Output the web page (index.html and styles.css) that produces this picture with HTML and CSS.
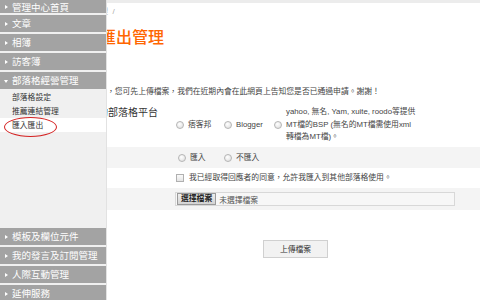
FILE: index.html
```html
<!DOCTYPE html>
<html lang="zh-Hant">
<head>
<meta charset="utf-8">
<title>匯入匯出管理</title>
<link rel="stylesheet" href="styles.css">
</head>
<body>
<div class="page">
  <div class="topbar"></div>
  <div class="content">
    <div class="crumb">部落格管理&nbsp; /</div>
    <h1 class="title">匯入匯出管理</h1>
    <p class="intro">若您想使用，您可先上傳檔案，我們在近期內會在此網頁上告知您是否已通過申請。謝謝！</p>
    <div class="form">
      <div class="row row-a">
        <div class="label">您原本的部落格平台</div>
        <div class="options">
          <label class="opt opt-1"><span class="radio"></span>痞客邦</label>
          <label class="opt opt-2"><span class="radio"></span>Blogger</label>
          <label class="opt opt-3"><span class="radio"></span><span class="multi">yahoo, 無名, Yam, xuite, roodo等提供<br>MT檔的BSP (無名的MT檔需使用xml<br>轉檔為MT檔)。</span></label>
        </div>
      </div>
      <div class="row row-b band">
        <div class="label">留言</div>
        <div class="options">
          <label class="opt opt-in"><span class="radio"></span>匯入</label>
          <label class="opt"><span class="radio"></span>不匯入</label>
        </div>
      </div>
      <div class="row row-c">
        <div class="label">同意</div>
        <label class="opt"><span class="check"></span>我已經取得回應者的同意，允許我匯入到其他部落格使用。</label>
      </div>
      <div class="row row-d band">
        <div class="label">檔案</div>
        <div class="filebox"><span class="filebtn">選擇檔案</span><span class="filename">未選擇檔案</span></div>
      </div>
    </div>
    <div class="actions"><button class="upload" type="button">上傳檔案</button></div>
  </div>
</div>
<nav class="sidebar">
  <div class="head">管理中心首頁</div>
  <div class="head">文章</div>
  <div class="head">相簿</div>
  <div class="head">訪客簿</div>
  <div class="head open">部落格經營管理</div>
  <div class="submenu">
    <a href="#">部落格設定</a>
    <a href="#">推薦連結管理</a>
    <a href="#" class="current">匯入匯出<span class="circle"></span></a>
  </div>
  <div class="head">模板及欄位元件</div>
  <div class="head">我的發言及訂閱管理</div>
  <div class="head">人際互動管理</div>
  <div class="head">延伸服務</div>
</nav>
</body>
</html>
```
FILE: styles.css
```css
* { box-sizing: border-box; margin: 0; padding: 0; }
html, body { width: 480px; height: 300px; overflow: hidden; background: #fff; }
body {
  position: relative;
  font-family: "Liberation Sans", "Noto Sans CJK TC", sans-serif;
  color: #333;
}
.topbar { height: 3px; background: #ececec; }
.content { padding-left: 68px; }
.crumb { margin-top: 3px; font-size: 8px; line-height: 12px; color: #aaa; white-space: nowrap; }
.title {
  margin-top: 10px;
  font-size: 16px;
  line-height: 20px;
  font-weight: 500;
  color: #ff6600;
  white-space: nowrap;
}
.intro {
  margin-top: 38px;
  font-size: 7.8px;
  line-height: 12px;
  color: #444;
  white-space: nowrap;
}
.form { margin-top: 1px; }
.row { display: flex; align-items: center; font-size: 7.8px; color: #444; }
.band { background: #f4f4f4; }
.label { width: 108px; flex: none; font-size: 10px; line-height: 14px; color: #333; white-space: nowrap; overflow: hidden; }
.row-a { height: 48px; align-items: flex-start; }
.row-a .label { padding-top: 7px; }
.row-a .options { align-self: center; padding-top: 4px; }
.row-b { height: 21px; }
.row-c { height: 20px; }
.row-d { height: 22px; }
.options { display: flex; align-items: center; }
.opt { display: flex; align-items: center; white-space: nowrap; line-height: 12px; }
.opt-1 { width: 48px; }
.opt-2 { width: 50px; }
.opt-in { width: 46px; margin-left: 2px; }
.multi { line-height: 12.5px; }
.radio {
  flex: none;
  width: 8px; height: 8px;
  margin-right: 4px;
  border: 1px solid #b5b5b5;
  border-radius: 50%;
  background: radial-gradient(circle at 40% 35%, #fff 0, #e6e6e6 70%);
}
.check {
  flex: none;
  width: 8px; height: 8px;
  margin-right: 5px;
  border: 1px solid #b0b0b0;
  background: linear-gradient(#fafafa, #e4e4e4);
}
.filebox {
  display: flex; align-items: center;
  width: 280px; height: 14px;
  margin-left: -1px;
  border: 1px solid #d8d8d8;
  background: #f7f7f7;
}
.filebtn {
  height: 12px;
  padding: 0 3px;
  margin-left: 1px;
  border: 1px solid #9a9a9a;
  background: linear-gradient(#eee, #d4d4d4);
  font-size: 7.8px; line-height: 10px; font-weight: bold; color: #222;
}
.filename { margin-left: 3px; font-size: 7.8px; color: #555; }
.actions { margin-top: 28px; padding-left: 195px; }
.upload {
  width: 65px; height: 18px;
  border: 1px solid #d0d0d0;
  background: #f2f2f2;
  font-family: inherit; font-size: 7.8px; color: #333;
}

.sidebar {
  position: absolute; left: 0; top: 0;
  width: 107px; height: 306px;
  background: #f0f0f0;
  border-right: 1px solid #e2e2e2;
  display: flex; flex-direction: column;
  font-family: "Noto Sans CJK TC", sans-serif;
}
.head {
  position: relative;
  flex: none;
  height: 17px; margin-bottom: 2px;
  padding-left: 12px;
  background: #a3a3a3;
  color: #fff;
  font-size: 9.5px; line-height: 17px;
  white-space: nowrap;
}
.head:first-child { height: 13px; line-height: 14px; }
.head::before {
  content: ""; position: absolute; left: 5px; top: 7px;
  border-left: 3px solid #fff;
  border-top: 2px solid transparent;
  border-bottom: 2px solid transparent;
}
.head:first-child::before { top: 5px; }
.head.open { margin-bottom: 0; }
.head.open::before {
  left: 4px; top: 8px;
  border-top: 3px solid #fff;
  border-left: 2px solid transparent;
  border-right: 2px solid transparent;
  border-bottom: 0;
}
.submenu { flex: none; height: 139px; padding-top: 1px; }
.submenu a {
  display: block; height: 14px; line-height: 14px;
  padding-left: 12px;
  font-size: 7.8px; color: #333; text-decoration: none;
}
.submenu .current { position: relative; background: #fff; }
.circle {
  position: absolute; left: 4px; top: -1px;
  width: 53px; height: 20px;
  border: 1.5px solid #d42020;
  border-radius: 50%;
}
```
